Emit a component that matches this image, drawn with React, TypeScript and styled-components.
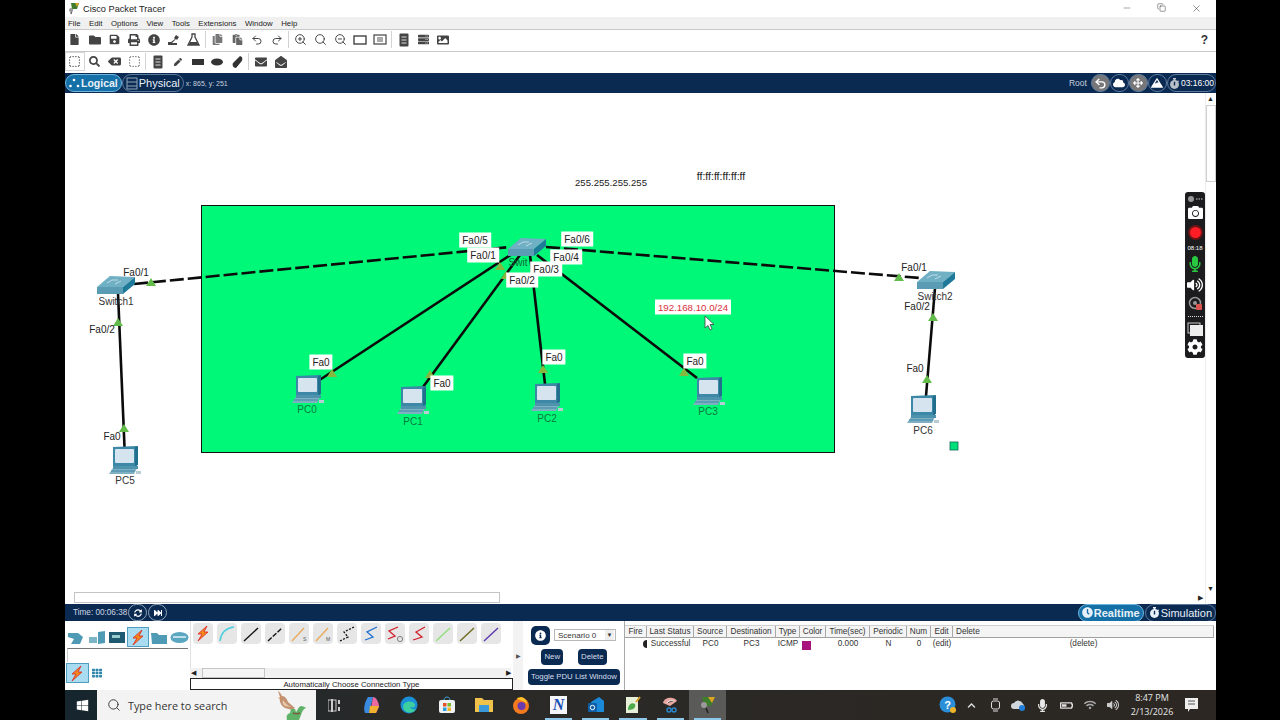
import React from "react";
import styled, { createGlobalStyle } from "styled-components";
import {
  FaFile, FaFolder, FaSave, FaPrint, FaInfoCircle, FaCopy, FaPaste, FaBackspace,
  FaSearch, FaPen, FaEnvelope, FaEnvelopeOpen, FaCog, FaCamera,
  FaMicrophone, FaVolumeUp, FaCloud, FaArrowsAlt, FaMountain, FaStopwatch, FaClock,
  FaServer, FaImage, FaWindows, FaChevronUp,
  FaWifi, FaBatteryHalf, FaFastForward, FaSyncAlt, FaTh,
} from "react-icons/fa";
import { Undo2, Redo2, ZoomIn, ZoomOut, Search, Minus, X, Copy, SquareDashed } from "lucide-react";

const NAVY = "#0b2a52";
const UI = `"Liberation Sans", Arial, sans-serif`;

const GlobalStyle = createGlobalStyle`
  html, body { margin: 0; padding: 0; background: #000; }
  * { box-sizing: border-box; }
  body { font-family: ${UI}; overflow: hidden; }
`;

const Screen = styled.div`
  width: 1280px;
  height: 720px;
  background: #000;
  padding: 0 64px 0 65px;
`;
const Win = styled.div`
  height: 100%;
  display: flex;
  flex-direction: column;
  background: #fff;
`;
const TitleBar = styled.div`
  height: 17px;
  display: flex;
  align-items: center;
  padding-left: 3px;
  gap: 3px;
  font-size: 9.2px;
  color: #222;
  background: #fff;
`;
const WinControls = styled.div`
  margin-left: auto;
  display: flex;
  padding-right: 2px;
  color: #222;
`;
const WinBtn = styled.div`
  width: 35px;
  display: flex;
  justify-content: center;
`;
const MenuBar = styled.div`
  height: 12px;
  display: flex;
  align-items: center;
  gap: 8.5px;
  padding-left: 3px;
  font-size: 7.8px;
  color: #222;
  background: #f0f0f0;
`;
const Toolbar = styled.div`
  height: 22px;
  display: flex;
  align-items: center;
  padding-bottom: 2px;
  background: #fff;
  border-top: 1px solid #c9c9c9;
  color: #444;
`;
const ToolBtn = styled.div<{ $boxed?: boolean }>`
  width: 19.8px;
  height: 19px;
  display: flex;
  align-items: center;
  justify-content: center;
  ${(p) => p.$boxed && "outline: 1px solid #d5d5d5; outline-offset: -1px;"}
`;
const ToolSep = styled.div`
  width: 1px;
  height: 17px;
  margin: 0 2px 0 1px;
  background: #d2d2d2;
`;
const HelpMark = styled.div`
  margin-left: auto;
  margin-right: 8px;
  font-size: 12px;
  font-weight: 700;
  color: #333;
`;
const NavBar = styled.div`
  height: 20px;
  display: flex;
  align-items: center;
  background: ${NAVY};
  color: #dfe6ee;
`;
const Pill = styled.div<{ $active?: boolean; $size?: number }>`
  height: 18px;
  display: flex;
  align-items: center;
  gap: 1px;
  padding: 0 3px;
  border-radius: 9px;
  border: 1px solid ${(p) => (p.$active ? "#6fb6dc" : "#5d7a9c")};
  background: ${(p) => (p.$active ? "#1670a8" : "transparent")};
  color: #e8f0f7;
  font-size: ${(p) => p.$size ?? 11}px;
  font-weight: ${(p) => (p.$active ? 700 : 400)};
  white-space: nowrap;
`;
const Coords = styled.span`
  font-size: 7px;
  color: #c9d2dc;
  margin-left: 2px;
`;
const NavRight = styled.div`
  margin-left: auto;
  display: flex;
  align-items: center;
  font-size: 8.5px;
`;
const RootText = styled.span`
  margin-right: 4px;
  color: #c6d1dd;
`;
const RoundBtn = styled.div<{ $grey?: boolean; $wide?: boolean }>`
  height: 18px;
  min-width: 19px;
  border-radius: 9px;
  border: 1px solid #5d7a9c;
  background: ${(p) => (p.$grey ? "#77777a" : "transparent")};
  display: flex;
  align-items: center;
  justify-content: center;
  gap: 1px;
  color: #fff;
  padding: ${(p) => (p.$wide ? "0 1px" : "0")};
`;
const Canvas = styled.div`
  position: relative;
  height: 511px;
  background: #fff;
  overflow: hidden;
`;
const Wiring = styled.svg`
  position: absolute;
  inset: 0;
`;
const Zone = styled.div`
  position: absolute;
  left: 136px;
  top: 112px;
  width: 634px;
  height: 248px;
  background: #00f878;
  border: 1px solid #111;
`;
const Tag = styled.div.attrs<{ $x: number; $y: number }>((p) => ({
  style: { left: p.$x - 65, top: p.$y - 93 },
}))<{ $x: number; $y: number; $on?: boolean; $tone?: string; $size?: number }>`
  position: absolute;
  transform: translate(-50%, -50%);
  padding: 2px 3px;
  line-height: 11px;
  font-size: ${(p) => p.$size ?? 10}px;
  white-space: nowrap;
  color: ${(p) => p.$tone ?? "#222"};
  background: ${(p) => (p.$on ? "#fff" : "transparent")};
`;
const VScroll = styled.div`
  position: absolute;
  right: 0;
  top: 0;
  bottom: 0;
  width: 11px;
  background: #fff;
  border-left: 1px solid #ececec;
`;
const VThumb = styled.div`
  margin-top: 12px;
  height: 77px;
  background: #fff;
  border: 1px solid #cfcfcf;
`;
const HScroll = styled.div`
  position: absolute;
  left: 0;
  right: 11px;
  bottom: 1px;
  height: 11px;
  background: #fff;
`;
const HThumb = styled.div`
  margin-left: 9px;
  width: 426px;
  height: 100%;
  border: 1px solid #c4c4c4;
`;
const Arrow = styled.span<{ $r: number; $b: number }>`
  position: absolute;
  right: ${(p) => p.$r}px;
  bottom: ${(p) => p.$b}px;
  font-size: 7px;
  line-height: 7px;
  color: #222;
`;
const Recorder = styled.div`
  position: absolute;
  left: 1120px;
  top: 99px;
  width: 20px;
  height: 166px;
  border-radius: 3px;
  background: #1c1c1e;
  display: flex;
  flex-direction: column;
  align-items: center;
  color: #fff;
`;
const RecSlot = styled.div<{ $h: number; $tone?: string }>`
  height: ${(p) => p.$h}px;
  display: flex;
  align-items: center;
  justify-content: center;
  color: ${(p) => p.$tone ?? "#fff"};
  font-size: 6px;
`;
const RecDot = styled.div`
  width: 11px;
  height: 11px;
  border-radius: 50%;
  background: #ff1d25;
  box-shadow: 0 0 0 2px #6e1417;
`;
const RecDivider = styled.div`
  width: 15px;
  border-top: 1px dotted #ddd;
  margin: 3px 0;
`;
const TimeBar = styled.div`
  height: 17px;
  display: flex;
  align-items: center;
  background: ${NAVY};
  padding-left: 8px;
  color: #cfd8e3;
  font-size: 8.2px;
`;
const TimeBtn = styled.div`
  width: 19px;
  height: 17px;
  border-radius: 9px;
  border: 1px solid #8ea3bb;
  margin-left: 1px;
  display: flex;
  align-items: center;
  justify-content: center;
  color: #fff;
`;
const ModeGroup = styled.div`
  margin-left: auto;
  display: flex;
  gap: 1px;
`;
const Bottom = styled.div`
  height: 69px;
  display: flex;
  background: #fff;
`;
const DevicePanel = styled.div`
  width: 125px;
  display: flex;
  flex-direction: column;
  padding: 6px 0 0 1px;
`;
const DeviceRow = styled.div`
  display: flex;
  height: 20px;
  align-items: center;
`;
const DeviceCell = styled.div<{ $sel?: boolean }>`
  width: 20.6px;
  height: 18px;
  display: flex;
  align-items: center;
  justify-content: center;
  ${(p) => p.$sel && "background: #a9dcf0; outline: 1px solid #4f9ec0;"}
`;
const DeviceLine = styled.div`
  margin: 1px 2px 0 1px;
  height: 14px;
  border-top: 1px solid #777;
  border-left: 1px solid #ccc;
`;
const SubRow = styled.div`
  margin-top: 2px;
  display: flex;
  align-items: center;
  gap: 4px;
  padding-left: 1px;
  color: #2e86ab;
`;
const ConnPanel = styled.div`
  width: 324px;
  display: flex;
  flex-direction: column;
`;
const ConnList = styled.div`
  height: 47px;
  display: flex;
  gap: 3.6px;
  padding: 2px 0 0 2px;
  border-left: 1px solid #e0e0e0;
`;
const ConnBtn = styled.div`
  width: 20.4px;
  height: 21px;
  border-radius: 4px;
  background: #e6e6e6;
  display: flex;
  align-items: center;
  justify-content: center;
`;
const ConnScroll = styled.div`
  position: relative;
  height: 10px;
  background: #f1f1f1;
  margin-right: 2px;
`;
const ConnThumb = styled.div`
  margin-left: 12px;
  width: 63px;
  height: 100%;
  background: #f5f5f5;
  border: 1px solid #c4c4c4;
`;
const ConnCaption = styled.div`
  height: 12px;
  border: 1px solid #222;
  font-size: 7.8px;
  line-height: 11px;
  text-align: center;
  color: #222;
  margin-top: auto;
`;
const Splitter = styled.div`
  width: 10px;
  display: flex;
  align-items: center;
  justify-content: center;
  color: #555;
  font-size: 6px;
  background: #f3f3f3;
`;
const ScenarioPanel = styled.div`
  width: 101px;
  padding: 4px 5px 0 6px;
  display: flex;
  flex-direction: column;
  align-items: center;
`;
const ScenarioTop = styled.div`
  width: 100%;
  display: flex;
  align-items: flex-start;
  gap: 4px;
  padding-left: 2px;
`;
const InfoBtn = styled.div`
  width: 19px;
  height: 19px;
  margin-top: 1px;
  border-radius: 5px;
  background: ${NAVY};
  display: flex;
  align-items: center;
  justify-content: center;
  color: #fff;
`;
const ScenarioSelect = styled.div`
  width: 62px;
  height: 12px;
  margin-top: 4px;
  border: 1px solid #b8b8b8;
  font-size: 8px;
  line-height: 11px;
  padding-left: 3px;
  display: flex;
  justify-content: space-between;
  color: #333;
`;
const Caret = styled.span`
  width: 9px;
  margin-right: 1px;
  text-align: center;
  font-size: 6px;
  background: #eee;
`;
const ScenarioRow = styled.div`
  margin-top: 4px;
  width: 100%;
  display: flex;
  justify-content: center;
  gap: 15px;
`;
const NavyBtn = styled.div`
  height: 16px;
  padding: 0 3px;
  border-radius: 4px;
  background: ${NAVY};
  color: #d6deea;
  font-size: 7.8px;
  line-height: 16px;
  white-space: nowrap;
`;
const ToggleRow = styled.div`
  margin-top: 4px;
`;
const PduTable = styled.div`
  flex: 1;
  border-left: 1px solid #aaa;
  padding-top: 4px;
  font-size: 8.2px;
  color: #333;
`;
const PduGrid = styled.div<{ $head?: boolean }>`
  display: grid;
  grid-template-columns: 22px 47px 33px 49px 24px 26px 44px 37px 24px 22px 261px;
  height: ${(p) => (p.$head ? 13 : 12)}px;
  line-height: 12px;
  margin-right: 2px;
  ${(p) => p.$head && "background: #f4f4f4; border-bottom: 1px solid #a0a0a0; border-top: 1px solid #d0d0d0;"}
`;
const PduHead = styled.div<{ $left?: boolean }>`
  border-right: 1px solid #a8a8a8;
  text-align: ${(p) => (p.$left ? "left" : "center")};
  padding-left: ${(p) => (p.$left ? 3 : 0)}px;
  white-space: nowrap;
`;
const PduCell = styled.div`
  text-align: center;
  white-space: nowrap;
`;
const Swatch = styled.div`
  width: 9px;
  height: 9px;
  margin: 3px 0 0 2px;
  background: #a8127d;
`;
const FireDot = styled.div`
  margin: 2px 0 0 18px;
  width: 4px;
  height: 8px;
  border-radius: 4px 0 0 4px;
  background: #222;
`;
const TaskBar = styled.div`
  height: 30px;
  display: flex;
  align-items: center;
  background: linear-gradient(90deg, #16262e 0%, #2a2a28 30%, #2c2722 100%);
  color: #eee;
`;
const StartBtn = styled.div`
  width: 32px;
  display: flex;
  justify-content: center;
  color: #fff;
  padding-left: 2px;
`;
const SearchBox = styled.div`
  position: relative;
  width: 219px;
  height: 30px;
  background: #f3f3f3;
  display: flex;
  align-items: center;
  gap: 7px;
  padding-left: 10px;
  font-family: "Open Sans", sans-serif;
  font-size: 10.8px;
  color: #333;
  overflow: hidden;
`;
const Bird = styled.svg`
  position: absolute;
  right: 9px;
  top: 0;
`;
const TaskApps = styled.div`
  display: flex;
`;
const TaskApp = styled.div<{ $active?: boolean; $open?: boolean }>`
  position: relative;
  width: 37.3px;
  height: 30px;
  display: flex;
  align-items: center;
  justify-content: center;
  background: ${(p) => (p.$active ? "#5a5a58" : "transparent")};
  ${(p) =>
    p.$open &&
    `&::after { content: ""; position: absolute; left: 5px; right: 5px; bottom: 0; height: 2px; background: #8ec8ea; }`}
`;
const NLetter = styled.span`
  width: 17px;
  height: 18px;
  background: #f4f6fa;
  color: #1a4fb5;
  font: italic 700 16px/18px "Liberation Serif", serif;
  text-align: center;
`;
const Tray = styled.div`
  margin-left: auto;
  display: flex;
  align-items: center;
  color: #ddd;
`;
const TrayIcon = styled.div`
  width: 23.6px;
  display: flex;
  justify-content: center;
`;
const Clock = styled.div`
  width: 52px;
  margin-left: 1px;
  text-align: center;
  font-family: "Open Sans", sans-serif;
  font-size: 9px;
  line-height: 14px;
  color: #e6e6e6;
`;
const Notify = styled.div`
  width: 26px;
  margin-right: 12px;
  display: flex;
  justify-content: center;
`;

const SwitchBox = ({ x, y }: { x: number; y: number }) => (
  <g transform={`translate(${x} ${y})`}>
    <polygon points="0,12 13,1 38,2 26,12" fill="#6fb0c4" />
    <polygon points="0,12 26,12 26,19 0,19" fill="#5a9cb3" />
    <polygon points="26,12 38,2 38,9 26,19" fill="#1f7a99" />
    <path d="M10 8l5-3M18 9l6-3M15 5l6 0" stroke="#d4e6ee" strokeWidth="0.8" />
  </g>
);

const PcBox = ({ x, y }: { x: number; y: number }) => (
  <g transform={`translate(${x} ${y})`}>
    <polygon points="3,1 27,0 27,20 3,20" fill="#3c88a6" />
    <rect x="5" y="3" width="19" height="14" rx="1" fill="#d6e4f0" />
    <polygon points="25,1 28,0 28,19 25,20" fill="#216f8d" />
    <polygon points="3,22 27,22 24,28 -1,28" fill="#7fb0c2" />
    <rect x="3" y="20" width="25" height="3" fill="#4e93ad" />
    <path d="M1 25h24" stroke="#3c88a6" strokeWidth="1" />
    <rect x="26" y="25" width="5" height="3" fill="#b8ccd6" />
  </g>
);

const Link = styled.line.attrs({ stroke: "#0b0b0b", strokeWidth: 2.6 })``;

const cables: [number, number, number, number][] = [
  [118, 293, 124.5, 447],
  [935, 288, 926, 396],
  [318, 381, 515, 252],
  [423, 387, 520, 255],
  [545, 384, 530, 255],
  [697, 378, 537, 255],
];
const trunks: [number, number, number, number][] = [
  [134, 284, 510, 247],
  [546, 247, 920, 278],
];
const lights: [number, number, string][] = [
  [151, 282, "#63bb4a"], [118, 322, "#63bb4a"], [124, 428, "#63bb4a"],
  [899, 277, "#63bb4a"], [933, 317, "#63bb4a"], [927, 379, "#63bb4a"],
  [332, 373, "#86b83f"], [430, 374, "#86b83f"], [543, 369, "#86b83f"], [684, 372, "#86b83f"],
  [500, 266, "#86b83f"], [506, 275, "#86b83f"],
];
const ports: [string, number, number, boolean][] = [
  ["Fa0/1", 136, 272, false], ["Fa0/2", 102, 329, false], ["Fa0", 112, 436, false],
  ["Fa0/1", 914, 267, false], ["Fa0/2", 917, 306, false], ["Fa0", 915, 368, false],
  ["Fa0", 321, 362, true], ["Fa0", 442, 383, true], ["Fa0", 554, 357, true], ["Fa0", 695, 361, true],
  ["Fa0/5", 475, 240, true], ["Fa0/1", 483, 255, true], ["Fa0/6", 577, 239, true],
  ["Fa0/4", 566, 257, true], ["Fa0/3", 546, 269, true], ["Fa0/2", 522, 280, true],
];
const names: [string, number, number, string][] = [
  ["Switch1", 116, 301, "#333"], ["Switch2", 935, 296, "#333"],
  ["PC0", 307, 409, "#0a7a3e"], ["PC1", 413, 421, "#0a7a3e"], ["PC2", 547, 418, "#0a7a3e"],
  ["PC3", 708, 411, "#0a7a3e"], ["PC5", 125, 480, "#333"], ["PC6", 923, 430, "#333"],
];

const Bolt = ({ c = "#f28a1c", o = "#d22" }: { c?: string; o?: string }) => (
  <svg width="16" height="17" viewBox="0 0 16 17">
    <path d="M12 1L3 9h4l-4 7 10-9H9z" fill={c} stroke={o} strokeWidth="0.8" />
  </svg>
);

const NoteGlyph = () => (
  <svg width="10" height="14" viewBox="0 0 10 14">
    <rect x="0.5" y="0.5" width="9" height="13" rx="1" fill="#444" />
    <path d="M2.500 4h5M2.500 7h5M2.500 10h5" stroke="#ddd" strokeWidth="1" />
  </svg>
);

const wires: React.ReactNode[] = [
  <Bolt />,
  <path d="M3 17C4 9 9 4 17 3" stroke="#4fd0dc" strokeWidth="1.6" fill="none" />,
  <path d="M3 17L17 4" stroke="#111" strokeWidth="1.4" />,
  <path d="M3 17L17 4" stroke="#111" strokeWidth="1.4" strokeDasharray="5 1.5" />,
  <><path d="M3 17L15 4" stroke="#e8a95a" strokeWidth="1.3" /><text x="14" y="17" fontSize="5" fill="#555">S</text></>,
  <><path d="M3 17L15 4" stroke="#e8a95a" strokeWidth="1.3" /><text x="13" y="17" fontSize="5" fill="#555">M</text></>,
  <path d="M3 17L11 13L7 8L17 3" stroke="#111" strokeWidth="1.3" fill="none" strokeDasharray="2 1.5" />,
  <path d="M4 16L12 13L6 8L16 3" stroke="#1f6fd0" strokeWidth="1.3" fill="none" />,
  <><path d="M3 15L10 12L4 7L13 3" stroke="#d21f2c" strokeWidth="1.3" fill="none" /><circle cx="15" cy="15" r="2.6" fill="none" stroke="#555" strokeWidth="0.7" /></>,
  <path d="M4 16L13 13L7 8L16 3" stroke="#d21f2c" strokeWidth="1.3" fill="none" />,
  <path d="M3 17L17 4" stroke="#8ee07a" strokeWidth="1.4" />,
  <path d="M3 17L17 4" stroke="#6e6a1d" strokeWidth="1.4" />,
  <path d="M3 17L17 4" stroke="#5a37b0" strokeWidth="1.4" />,
];

const headers = ["Fire", "Last Status", "Source", "Destination", "Type", "Color", "Time(sec)", "Periodic", "Num", "Edit"];

const DeviceGlyph = ({ kind }: { kind: number }) => {
  if (kind === 0)
    return (
      <svg width="18" height="15" viewBox="0 0 18 15">
        <path d="M1 3h10l5 4-3 7H4l3-5-6-2z" fill="#4f9ab5" />
      </svg>
    );
  if (kind === 1)
    return (
      <svg width="18" height="15" viewBox="0 0 18 15">
        <polygon points="1,7 9,7 9,13 1,13" fill="#7eb4c8" />
        <polygon points="10,2 17,1 17,13 10,14" fill="#4f9ab5" />
      </svg>
    );
  if (kind === 2)
    return (
      <svg width="18" height="14" viewBox="0 0 18 14">
        <rect x="1" y="2" width="16" height="11" fill="#1f5a70" />
        <rect x="4" y="5" width="8" height="3" fill="#9cc" />
      </svg>
    );
  if (kind === 4)
    return (
      <svg width="18" height="15" viewBox="0 0 18 15">
        <path d="M1 3h6l2 2h8v9H2z" fill="#4f9ab5" />
      </svg>
    );
  return (
    <svg width="19" height="13" viewBox="0 0 19 13">
      <ellipse cx="9.5" cy="6.5" rx="9" ry="5.5" fill="#5ba6c0" />
      <rect x="3" y="5" width="13" height="2" fill="#bfe0ea" />
    </svg>
  );
};

const App = () => {
  return (
    <>
      <GlobalStyle />
      <Screen>
        <Win>
          <TitleBar>
            <svg width="12" height="13" viewBox="0 0 12 13">
              <path d="M3 1h8L9 7H4z" fill="#3d7d2c" />
              <path d="M7 1h4L9 5z" fill="#d9a520" />
              <path d="M4 7l-1 5" stroke="#666" strokeWidth="1.5" />
              <circle cx="3" cy="8" r="2" fill="#999" />
            </svg>
            <span>Cisco Packet Tracer</span>
            <WinControls>
              <WinBtn><Minus size={10} strokeWidth={1} /></WinBtn>
              <WinBtn><Copy size={9} strokeWidth={1.2} /></WinBtn>
              <WinBtn><X size={11} strokeWidth={1} /></WinBtn>
            </WinControls>
          </TitleBar>
          <MenuBar>
            {["File", "Edit", "Options", "View", "Tools", "Extensions", "Window", "Help"].map((m) => (
              <span key={m}>{m}</span>
            ))}
          </MenuBar>
          <Toolbar>
            <ToolBtn><FaFile size={11} /></ToolBtn>
            <ToolBtn><FaFolder size={12} /></ToolBtn>
            <ToolBtn><FaSave size={11} /></ToolBtn>
            <ToolBtn><FaPrint size={12} /></ToolBtn>
            <ToolBtn><FaInfoCircle size={12} /></ToolBtn>
            <ToolBtn>
              <svg width="13" height="13" viewBox="0 0 13 13" fill="#444">
                <path d="M1 12h9v-2H5L9 6l1 1 2-3-3-2-2 3 1 1-4 3H1z" />
              </svg>
            </ToolBtn>
            <ToolBtn>
              <svg width="13" height="13" viewBox="0 0 13 13">
                <path d="M5 1h3v3l4 8H1l4-8z" fill="none" stroke="#444" strokeWidth="1.3" />
                <path d="M3 9h7l1.500 3h-10z" fill="#444" />
              </svg>
            </ToolBtn>
            <ToolSep />
            <ToolBtn><FaCopy size={11} color="#777" /></ToolBtn>
            <ToolBtn><FaPaste size={11} color="#666" /></ToolBtn>
            <ToolBtn><Undo2 size={12} strokeWidth={2} /></ToolBtn>
            <ToolBtn><Redo2 size={12} strokeWidth={2} /></ToolBtn>
            <ToolSep />
            <ToolBtn><ZoomIn size={13} strokeWidth={1.8} /></ToolBtn>
            <ToolBtn><Search size={13} strokeWidth={1.8} /></ToolBtn>
            <ToolBtn><ZoomOut size={13} strokeWidth={1.8} /></ToolBtn>
            <ToolBtn>
              <svg width="14" height="10" viewBox="0 0 14 10"><rect x="1" y="1" width="12" height="8" fill="none" stroke="#444" strokeWidth="1.4" /></svg>
            </ToolBtn>
            <ToolBtn>
              <svg width="14" height="11" viewBox="0 0 14 11"><rect x="1" y="1" width="12" height="9" fill="none" stroke="#444" strokeWidth="1.2" /><rect x="4" y="3" width="6" height="5" fill="#aaa" /></svg>
            </ToolBtn>
            <ToolSep />
            <ToolBtn><NoteGlyph /></ToolBtn>
            <ToolBtn><FaServer size={11} /></ToolBtn>
            <ToolBtn><FaImage size={12} /></ToolBtn>
            <HelpMark>?</HelpMark>
          </Toolbar>
          <Toolbar>
            <ToolBtn $boxed><SquareDashed size={13} strokeWidth={1.8} /></ToolBtn>
            <ToolBtn><FaSearch size={11} /></ToolBtn>
            <ToolBtn><FaBackspace size={13} /></ToolBtn>
            <ToolBtn><SquareDashed size={13} strokeWidth={1.5} /></ToolBtn>
            <ToolSep />
            <ToolBtn><NoteGlyph /></ToolBtn>
            <ToolBtn><FaPen size={8} /></ToolBtn>
            <ToolBtn>
              <svg width="14" height="8" viewBox="0 0 14 8"><rect x="1" y="1" width="12" height="6" fill="#333" /></svg>
            </ToolBtn>
            <ToolBtn>
              <svg width="14" height="8" viewBox="0 0 14 8"><ellipse cx="7" cy="4" rx="6" ry="3.5" fill="#333" /></svg>
            </ToolBtn>
            <ToolBtn>
              <svg width="12" height="14" viewBox="0 0 12 14"><path d="M9 1c3 1 3 4 1 6l-5 6c-3 0-4-3-3-5z" fill="#333" /></svg>
            </ToolBtn>
            <ToolSep />
            <ToolBtn><FaEnvelope size={12} /></ToolBtn>
            <ToolBtn><FaEnvelopeOpen size={12} /></ToolBtn>
          </Toolbar>
          <NavBar>
            <Pill $active $size={10.5}>
              <svg width="11" height="11" viewBox="0 0 11 11" fill="#fff">
                <circle cx="5" cy="2" r="1.3" /><circle cx="1.5" cy="8" r="1.3" /><circle cx="9" cy="8" r="1.3" />
              </svg>
              Logical
            </Pill>
            <Pill>
              <svg width="12" height="13" viewBox="0 0 12 13" fill="none" stroke="#8ea3bb">
                <rect x="1" y="1" width="10" height="11" /><path d="M1 5h10M1 9h10" />
              </svg>
              Physical
            </Pill>
            <Coords>x: 865, y: 251</Coords>
            <NavRight>
              <RootText>Root</RootText>
              <RoundBtn $grey><Undo2 size={13} strokeWidth={2.6} /></RoundBtn>
              <RoundBtn><FaCloud size={12} /></RoundBtn>
              <RoundBtn $grey><FaArrowsAlt size={10} /></RoundBtn>
              <RoundBtn><FaMountain size={12} /></RoundBtn>
              <RoundBtn $wide><FaStopwatch size={11} color="#b8c0c8" />03:16:00</RoundBtn>
            </NavRight>
          </NavBar>
          <Canvas>
            <Zone />
            <Wiring width="1151" height="511" viewBox="65 93 1151 511">
              {cables.map(([a, b, c, d], i) => (
                <Link key={i} x1={a} y1={b} x2={c} y2={d} />
              ))}
              {trunks.map(([a, b, c, d], i) => (
                <Link key={i} x1={a} y1={b} x2={c} y2={d} strokeDasharray="14 4" />
              ))}
              {lights.map(([x, y, fill], i) => (
                <polygon key={i} points={`${x - 5},${y + 4} ${x},${y - 4} ${x + 5},${y + 4}`} fill={fill} />
              ))}
              <SwitchBox x={508} y={237} />
              <SwitchBox x={97} y={275} />
              <SwitchBox x={917} y={270} />
              <PcBox x={293} y={375} />
              <PcBox x={398} y={386} />
              <PcBox x={532} y={383} />
              <PcBox x={694} y={377} />
              <PcBox x={110} y={446} />
              <PcBox x={908} y={395} />
            </Wiring>
            <Tag $x={518} $y={262} $tone="#0a6a38">Swit</Tag>
            {names.map(([t, x, y, tone]) => (
              <Tag key={t} $x={x} $y={y} $tone={tone}>{t}</Tag>
            ))}
            {ports.map(([t, x, y, on], i) => (
              <Tag key={i} $x={x} $y={y} $on={on}>{t}</Tag>
            ))}
            <Tag $x={611} $y={182} $size={9.6}>255.255.255.255</Tag>
            <Tag $x={721} $y={176} $size={10.5}>ff:ff:ff:ff:ff:ff</Tag>
            <Tag $x={693} $y={307} $on $tone="#d8303c" $size={9.7}>192.168.10.0/24</Tag>
            <Wiring width="1151" height="511" viewBox="65 93 1151 511">
              <path d="M705 316v12l3-2.500 2 4.500 2-1-2-4.500h4z" fill="#fff" stroke="#444" strokeWidth="0.8" />
              <rect x="950" y="442" width="8" height="8" fill="#00e07a" stroke="#165" strokeWidth="0.8" />
            </Wiring>
            <VScroll><VThumb /><Arrow $r={2} $b={502}>▲</Arrow><Arrow $r={2} $b={12}>▼</Arrow></VScroll>
            <HScroll><HThumb /><Arrow $r={2} $b={2}>▶</Arrow></HScroll>
            <Recorder>
              <RecSlot $h={14}>
                <svg width="16" height="8" viewBox="0 0 16 8"><circle cx="4" cy="4" r="3" fill="#999" /><path d="M9 4h7" stroke="#ccc" strokeDasharray="1.500 1" /></svg>
              </RecSlot>
              <RecSlot $h={14}><FaCamera size={15} /></RecSlot>
              <RecSlot $h={26}><RecDot /></RecSlot>
              <RecSlot $h={7}>08:18</RecSlot>
              <RecSlot $h={26} $tone="#28c840"><FaMicrophone size={16} /></RecSlot>
              <RecSlot $h={17}><FaVolumeUp size={16} /></RecSlot>
              <RecSlot $h={21}>
                <svg width="15" height="15" viewBox="0 0 15 15"><circle cx="7" cy="7" r="5.500" fill="none" stroke="#999" strokeWidth="1.500" /><circle cx="7" cy="7" r="2" fill="#999" /><rect x="8" y="8" width="6" height="6" rx="1" fill="#d9534f" /></svg>
              </RecSlot>
              <RecDivider />
              <RecSlot $h={17}>
                <svg width="16" height="14" viewBox="0 0 16 14"><rect x="1" y="1" width="12" height="10" fill="none" stroke="#ccc" /><rect x="3" y="3" width="13" height="11" fill="#eee" /></svg>
              </RecSlot>
              <RecSlot $h={22}><FaCog size={16} /></RecSlot>
            </Recorder>
          </Canvas>
          <TimeBar>
            <span>Time: 00:06:38</span>
            <TimeBtn><FaSyncAlt size={8} /></TimeBtn>
            <TimeBtn><FaFastForward size={8} /></TimeBtn>
            <ModeGroup>
              <Pill $active><FaClock size={11} />Realtime</Pill>
              <Pill><FaStopwatch size={11} />Simulation</Pill>
            </ModeGroup>
          </TimeBar>
          <Bottom>
            <DevicePanel>
              <DeviceRow>
                {[0, 1, 2].map((k) => (
                  <DeviceCell key={k}><DeviceGlyph kind={k} /></DeviceCell>
                ))}
                <DeviceCell $sel><Bolt /></DeviceCell>
                {[4, 5].map((k) => (
                  <DeviceCell key={k}><DeviceGlyph kind={k} /></DeviceCell>
                ))}
              </DeviceRow>
              <DeviceLine />
              <SubRow>
                <DeviceCell $sel><Bolt /></DeviceCell>
                <FaTh size={10} />
              </SubRow>
            </DevicePanel>
            <ConnPanel>
              <ConnList>
                {wires.map((w, i) => (
                  <ConnBtn key={i}>
                    {i === 0 ? w : <svg width="20" height="20" viewBox="0 0 20 20">{w}</svg>}
                  </ConnBtn>
                ))}
              </ConnList>
              <ConnScroll>
                <ConnThumb />
                <Arrow $r={315} $b={2}>◀</Arrow>
                <Arrow $r={0} $b={2}>▶</Arrow>
              </ConnScroll>
              <ConnCaption>Automatically Choose Connection Type</ConnCaption>
            </ConnPanel>
            <Splitter>▶</Splitter>
            <ScenarioPanel>
              <ScenarioTop>
                <InfoBtn><FaInfoCircle size={11} /></InfoBtn>
                <ScenarioSelect>Scenario 0<Caret>▼</Caret></ScenarioSelect>
              </ScenarioTop>
              <ScenarioRow>
                <NavyBtn>New</NavyBtn>
                <NavyBtn>Delete</NavyBtn>
              </ScenarioRow>
              <ToggleRow><NavyBtn>Toggle PDU List Window</NavyBtn></ToggleRow>
            </ScenarioPanel>
            <PduTable>
              <PduGrid $head>
                {headers.map((h) => (
                  <PduHead key={h}>{h}</PduHead>
                ))}
                <PduHead $left>Delete</PduHead>
              </PduGrid>
              <PduGrid>
                <FireDot />
                <PduCell>Successful</PduCell>
                <PduCell>PC0</PduCell>
                <PduCell>PC3</PduCell>
                <PduCell>ICMP</PduCell>
                <Swatch />
                <PduCell>0.000</PduCell>
                <PduCell>N</PduCell>
                <PduCell>0</PduCell>
                <PduCell>(edit)</PduCell>
                <PduCell>(delete)</PduCell>
              </PduGrid>
            </PduTable>
          </Bottom>
          <TaskBar>
            <StartBtn><FaWindows size={13} /></StartBtn>
            <SearchBox>
              <Search size={14} strokeWidth={1.6} />
              <span>Type here to search</span>
              <Bird width="32" height="30" viewBox="0 0 32 30">
                <path d="M3 1c2 1 3 3 4 5 3 0 5 3 6 6l7 6-3 2-7-2c-4-2-6-7-5-11z" fill="#c39272" />
                <path d="M6 7l-3 1 3 1z" fill="#e0863a" />
                <path d="M8 10c2 3 4 5 8 7l-6-1c-2-1-3-3-2-6z" fill="#e8c9ae" />
                <path d="M12 30c-1-4 0-6 3-7l1-4h4l1 3c2-2 2-5 5-6 2 0 4 1 5 2-3 1-4 4-5 7l-2 5z" fill="#5fb369" />
                <path d="M18 23c3 1 5 1 7 0" stroke="#7a5a40" strokeWidth="1.500" fill="none" />
              </Bird>
            </SearchBox>
            <TaskApps>
              <TaskApp>
                <svg width="14" height="15" viewBox="0 0 14 15"><rect x="3" y="1" width="2" height="13" fill="#ccc" /><rect x="0" y="2" width="8" height="11" fill="none" stroke="#ccc" /><rect x="10" y="2" width="2" height="4" fill="#ccc" /><rect x="10" y="9" width="2" height="4" fill="#ccc" /></svg>
              </TaskApp>
              <TaskApp>
                <svg width="18" height="18" viewBox="0 0 18 18"><path d="M5 1h5l-4 16H2c-2-4 0-12 3-16z" fill="#3a8ae0" /><path d="M10 1c3 0 6 5 6 10l-3 6H7z" fill="#e86aa0" /><path d="M7 10h9l-3 7H6z" fill="#f0b030" /></svg>
              </TaskApp>
              <TaskApp>
                <svg width="18" height="18" viewBox="0 0 18 18"><circle cx="9" cy="9" r="8.500" fill="#1a8fd8" /><path d="M3 10c1-5 9-6 12-2 1 3-2 4-5 3 1 2 4 3 6 2-2 4-6 4-9 3-3-1-4-3-4-6z" fill="#3cd0a0" /></svg>
              </TaskApp>
              <TaskApp>
                <svg width="18" height="18" viewBox="0 0 18 18"><rect x="1" y="4" width="16" height="13" rx="2" fill="#eef2f4" /><path d="M6 4c0-4 6-4 6 0" fill="none" stroke="#3aa0d8" /><rect x="5" y="7" width="3.500" height="3.500" fill="#e8502a" /><rect x="9.500" y="7" width="3.500" height="3.500" fill="#7cb82a" /><rect x="5" y="11.500" width="3.500" height="3.500" fill="#2a9fe0" /><rect x="9.500" y="11.500" width="3.500" height="3.500" fill="#f0b429" /></svg>
              </TaskApp>
              <TaskApp>
                <svg width="18" height="16" viewBox="0 0 18 16"><path d="M0 1h7l2 2h9v12H0z" fill="#f0c24c" /><rect x="4" y="8" width="10" height="7" fill="#3a9ad9" /></svg>
              </TaskApp>
              <TaskApp>
                <svg width="18" height="18" viewBox="0 0 18 18"><circle cx="9" cy="10" r="8" fill="#f47a1f" /><circle cx="9.500" cy="10" r="4" fill="#6a3ab0" /><path d="M5 2c1 3 6 1 10 6 0-4-3-7-6-7z" fill="#ffc02a" /></svg>
              </TaskApp>
              <TaskApp $open><NLetter>N</NLetter></TaskApp>
              <TaskApp $open>
                <svg width="18" height="18" viewBox="0 0 18 18"><path d="M4 6l8-5 5 4v11H4z" fill="#1a8ad8" /><rect x="1" y="7" width="9" height="9" rx="1" fill="#0e5fa8" /><circle cx="5.500" cy="11.500" r="2.200" fill="none" stroke="#fff" /></svg>
              </TaskApp>
              <TaskApp $open>
                <svg width="16" height="18" viewBox="0 0 16 18"><rect x="1" y="1" width="12" height="16" fill="#e6efd8" /><path d="M3 14c0-6 4-8 7-6 1 3-1 6-7 6z" fill="#4caa4a" /><path d="M11 6l4-5" stroke="#d8a12a" strokeWidth="2" /></svg>
              </TaskApp>
              <TaskApp $open>
                <svg width="18" height="18" viewBox="0 0 18 18"><path d="M2 7c1-6 11-7 14-2l-7 5z" fill="#e9a9a2" /><path d="M6 7c1-2 5-3 7-2" stroke="#fff" /><circle cx="8" cy="14" r="2" fill="none" stroke="#2a88d0" strokeWidth="1.400" /><circle cx="13" cy="14" r="2" fill="none" stroke="#2a88d0" strokeWidth="1.400" /></svg>
              </TaskApp>
              <TaskApp $active $open>
                <svg width="16" height="20" viewBox="0 0 16 20"><path d="M2 2h13l-4 9H5z" fill="#3d7d2c" /><path d="M8 2h7l-3 6z" fill="#d9a520" /><circle cx="4" cy="10" r="3" fill="#999" /><path d="M6 13l2 5" stroke="#222" strokeWidth="1.500" /></svg>
              </TaskApp>
            </TaskApps>
            <Tray>
              <TrayIcon>
                <svg width="18" height="18" viewBox="0 0 18 18"><circle cx="8.500" cy="8.500" r="8" fill="#2a8fd8" /><text x="8.500" y="12.500" fontSize="11" fontWeight="700" textAnchor="middle" fill="#fff">?</text><circle cx="14" cy="14" r="3" fill="#f0b429" /></svg>
              </TrayIcon>
              <TrayIcon><FaChevronUp size={9} /></TrayIcon>
              <TrayIcon>
                <svg width="11" height="14" viewBox="0 0 11 14" fill="none" stroke="#ddd"><rect x="1.500" y="3" width="8" height="8" rx="2" /><path d="M3 1h5M3 13h5" /></svg>
              </TrayIcon>
              <TrayIcon>
                <svg width="15" height="12" viewBox="0 0 15 12"><path d="M3 10a3 3 0 0 1 0-6 5 5 0 0 1 9 1 3 3 0 0 1 0 5z" fill="#cfd6dc" /><circle cx="11" cy="9" r="3" fill="#1f7fd8" /></svg>
              </TrayIcon>
              <TrayIcon><FaMicrophone size={13} color="#e8e8e8" /></TrayIcon>
              <TrayIcon><FaBatteryHalf size={13} /></TrayIcon>
              <TrayIcon><FaWifi size={12} color="#aaa" /></TrayIcon>
              <TrayIcon><FaVolumeUp size={12} color="#ccc" /></TrayIcon>
              <Clock>8:47 PM<br />2/13/2026</Clock>
              <Notify>
                <svg width="13" height="14" viewBox="0 0 13 14"><path d="M0 0h13v11H5l-2 3v-3H0z" fill="#eee" /><path d="M3 3h7M3 6h7" stroke="#555" /></svg>
              </Notify>
            </Tray>
          </TaskBar>
        </Win>
      </Screen>
    </>
  );
};

export default App;
